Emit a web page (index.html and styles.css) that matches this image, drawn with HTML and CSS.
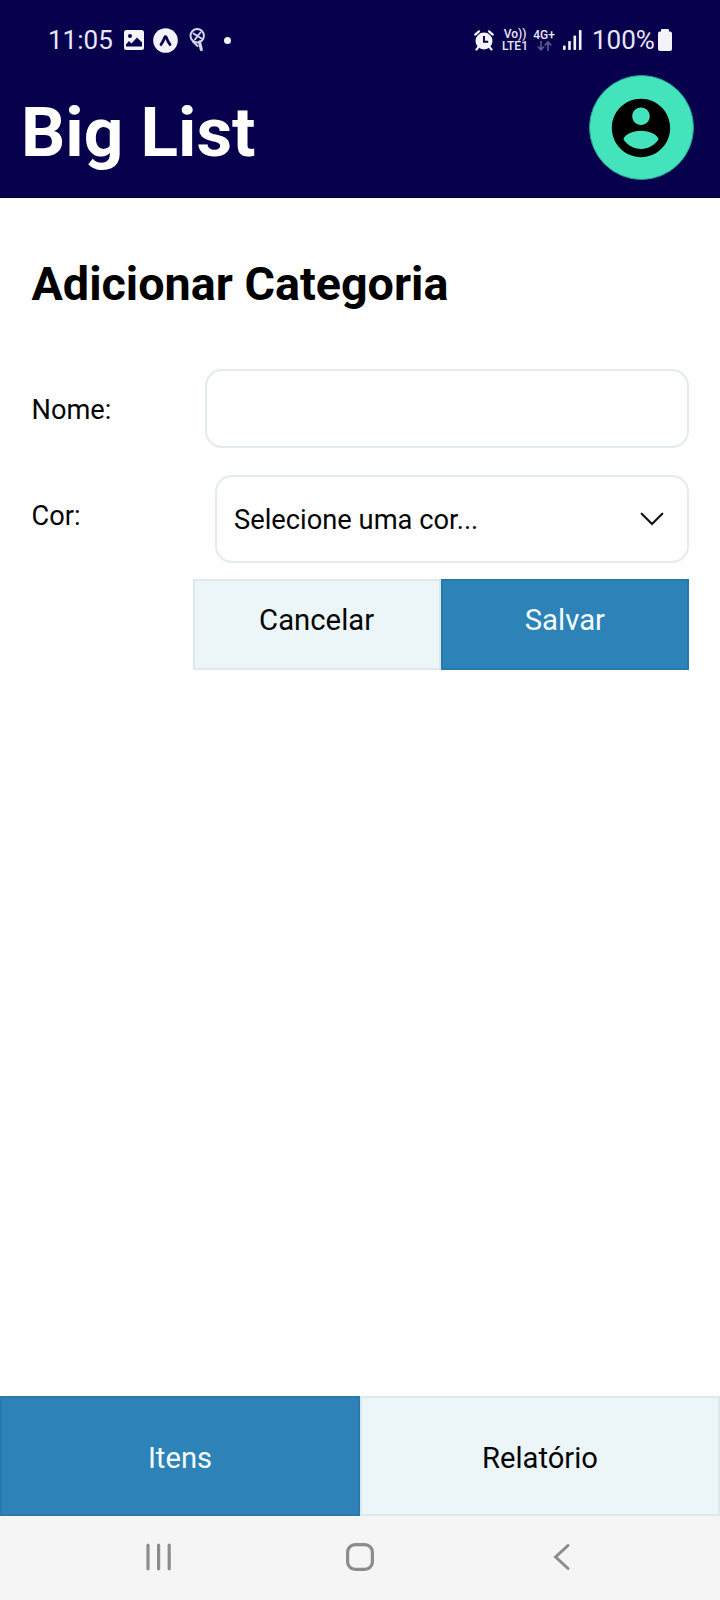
FILE: index.html
```html
<!DOCTYPE html>
<html lang="pt-BR">
<head>
<meta charset="utf-8">
<title>Big List</title>
<link rel="stylesheet" href="styles.css">
</head>
<body>
<header class="header">
  <div class="status">
    <span class="clock">11:05</span>
    <svg class="ic-image" width="20" height="20" viewBox="0 0 20 20"><path fill="#f4f2fb" fill-rule="evenodd" d="M2.500 0h15a2.500 2.500 0 0 1 2.500 2.500v15a2.500 2.500 0 0 1-2.500 2.500h-15a2.500 2.500 0 0 1-2.500-2.500v-15a2.500 2.500 0 0 1 2.500-2.500zM2 16.500h16v-4l-5-5-5.500 6-2.500-2.500-3 3.500zM6 4a2 2 0 1 0 0 4 2 2 0 0 0 0-4z"/></svg>
    <svg class="ic-expo" width="25" height="25" viewBox="0 0 25 25"><circle cx="12.500" cy="12.500" r="12.300" fill="#f4f2fb"/><path d="M8 16.500Q10.500 13 11.700 9.400Q12.500 8 13.300 9.400Q14.500 13 17 16.500" fill="none" stroke="#06004d" stroke-width="2.800" stroke-linecap="round"/></svg>
    <svg class="ic-pin" width="17" height="24" viewBox="0 0 17 24" fill="none" stroke="#d8d4ec" stroke-linecap="round"><circle cx="8.200" cy="7.800" r="6.700" stroke-width="2"/><path d="M4.500 5.500L8.500 8L11.500 4.500M8.500 8L6 11.500M8.500 8L12.500 10.500" stroke-width="1.900"/><path d="M4 13.500L8.500 18" stroke-width="2"/><path d="M10.500 14L12.300 21.500" stroke-width="3.200"/></svg>
    <span class="dot"></span>
    <span class="spacer"></span>
    <svg class="ic-alarm" width="20" height="21" viewBox="0 0 20 21"><circle cx="10" cy="11" r="8.500" fill="#f4f2fb"/><path d="M1.200 4.600L5 1.300M18.800 4.600L15 1.300M4.500 17l-2 2.500M15.500 17l2 2.500" stroke="#f4f2fb" stroke-width="2.200" stroke-linecap="round"/><path d="M10 6v5.800h4.200" fill="none" stroke="#06004d" stroke-width="1.900"/></svg>
    <span class="net volte"><span>Vo))</span><span>LTE1</span></span>
    <span class="net mobile"><span>4G+</span>
      <svg width="15" height="10" viewBox="0 0 15 10" fill="none" stroke="#5b5590" stroke-width="1.700"><path d="M4 0v9M.8 5.500L4 8.800 7.200 5.500M11 10V1M7.800 4.300L11 1l3.200 3.300"/></svg>
    </span>
    <svg class="ic-signal" width="19" height="20" viewBox="0 0 19 20" fill="#f4f2fb"><rect x="0" y="15.500" width="2.600" height="4.500" rx=".8"/><rect x="5.200" y="11" width="2.600" height="9" rx=".8"/><rect x="10.500" y="5.500" width="2.600" height="14.500" rx=".8"/><rect x="15.900" y="0" width="2.600" height="20" rx=".8"/></svg>
    <span class="percent">100%</span>
    <svg class="ic-battery" width="14" height="22" viewBox="0 0 14 22"><path fill="#f4f2fb" d="M4 0h6q1 0 1 1v1.500h1q2 0 2 2V20q0 2-2 2H2q-2 0-2-2V4.500q0-2 2-2h1V1q0-1 1-1z"/></svg>
  </div>
  <div class="titlebar">
    <h1 class="brand">Big List</h1>
    <div class="avatar">
      <svg width="70" height="70" viewBox="0 0 24 24"><path d="M12 2C6.480 2 2 6.480 2 12s4.480 10 10 10 10-4.480 10-10S17.520 2 12 2zm0 3c1.660 0 3 1.340 3 3s-1.340 3-3 3-3-1.340-3-3 1.340-3 3-3zm0 14.200c-2.500 0-4.710-1.280-6-3.220.03-1.990 4-3.080 6-3.080 1.990 0 5.970 1.090 6 3.080-1.290 1.940-3.500 3.220-6 3.220z"/></svg>
    </div>
  </div>
</header>
<main class="content">
  <h2 class="heading">Adicionar Categoria</h2>
  <div class="row row-name"><label class="label" for="nome">Nome:</label><input class="field" id="nome" type="text"></div>
  <div class="row row-color"><span class="label">Cor:</span>
    <div class="select"><span>Selecione uma cor...</span>
      <svg width="24" height="14" viewBox="0 0 24 14"><path d="M1.700 1.700L12 12 22.300 1.700" fill="none" stroke="#111" stroke-width="2.100" stroke-linecap="round"/></svg>
    </div>
  </div>
  <div class="actions"><div class="btn light">Cancelar</div><div class="btn primary">Salvar</div></div>
</main>
<nav class="tabs"><div class="tab primary">Itens</div><div class="tab light">Relatório</div></nav>
<footer class="sysnav">
  <svg width="28" height="28" viewBox="0 0 28 28"><path d="M4 2.200v23.600M14.600 2.200v23.600M25.200 2.200v23.600" stroke="#8c8c8c" stroke-width="3.200" stroke-linecap="round"/></svg>
  <svg width="28" height="28" viewBox="0 0 28 28"><rect x="1.600" y="1.600" width="24.800" height="24.800" rx="7.500" fill="none" stroke="#8c8c8c" stroke-width="3.200"/></svg>
  <svg width="28" height="28" viewBox="0 0 28 28"><path d="M20 2.500L7.600 14 20 25.500" fill="none" stroke="#8c8c8c" stroke-width="3" stroke-linecap="round"/></svg>
</footer>
</body>
</html>
```

FILE: styles.css
```css
* { box-sizing: border-box; }
body {
  margin: 0;
  height: 1600px;
  display: flex;
  flex-direction: column;
  background: #fefefe;
  color: #050505;
  font-family: Roboto, sans-serif;
}
svg { display: block; flex: none; }
.header { height: 198px; background: #06004d; border-bottom: 1px solid #03002a; }
.status {
  height: 70px;
  padding: 10px 48px 0 48px;
  display: flex;
  align-items: center;
  color: #e9e6f7;
}
.clock { width: 76px; font-size: 26px; line-height: 30px; }
.ic-expo { margin-left: 9px; }
.ic-pin { margin-left: 11px; }
.dot { width: 7px; height: 7px; margin-left: 18px; border-radius: 50%; background: #f4f2fb; }
.spacer { flex: 1; }
.net { display: flex; flex-direction: column; align-items: center; font-size: 12px; line-height: 12px; font-weight: 500; }
.volte { width: 26px; margin-left: 8px; }
.mobile { width: 22px; margin-left: 5px; }
.ic-signal { margin-left: 8px; }
.percent { width: 64px; margin-left: 10px; font-size: 26px; line-height: 30px; }
.ic-battery { margin-left: 2px; }
.titlebar { height: 127px; padding: 5px 26px 0 21px; display: flex; justify-content: space-between; align-items: flex-start; }
.brand { margin: 17px 0 0; font-size: 69.4px; line-height: 82px; font-weight: 700; color: #fff; }
.avatar { width: 105px; height: 105px; padding-right: 1px; border: 1px solid #259b90; border-radius: 50%; background: #43e4bb; display: flex; align-items: center; justify-content: center; }
.content { flex: 1; padding: 59px 31px 0 31.5px; }
.heading { margin: 0; font-size: 46.7px; line-height: 54px; font-weight: 700; color: #000; }
.row { display: flex; justify-content: space-between; }
.row-name { margin-top: 58px; height: 79px; }
.row-color { margin-top: 27px; height: 88px; }
.label { margin-top: 25px; font-size: 27.2px; line-height: 32px; }
.field { width: 484px; height: 79px; border: 2px solid #e4ebeb; border-radius: 17px; background: #fefefe; padding: 0 18px; font: 27px Roboto, sans-serif; }
.select { width: 474px; height: 88px; padding: 2px 23px 0 17px; border: 2px solid #e4ebeb; border-radius: 17px; background: #fefefe; display: flex; align-items: center; justify-content: space-between; font-size: 27.3px; }
.select svg { margin-bottom: 2px; }
.actions { margin: 16px 0 0 161px; height: 91px; display: flex; }
.btn { flex: 1; padding-top: 22px; text-align: center; font-size: 29.3px; line-height: 34px; }
.light { background: #ecf6f9; border: 2px solid #dfe8eb; }
.primary { background: #2d82b8; border: 2px solid #2678ad; color: #f5fcff; }
.tabs { height: 120px; display: flex; }
.tab { flex: 1; padding-top: 3px; display: flex; align-items: center; justify-content: center; font-size: 29.2px; }
.sysnav { height: 84px; padding: 0 144px 2px; background: #f5f5f5; display: flex; align-items: center; justify-content: space-between; }
```
